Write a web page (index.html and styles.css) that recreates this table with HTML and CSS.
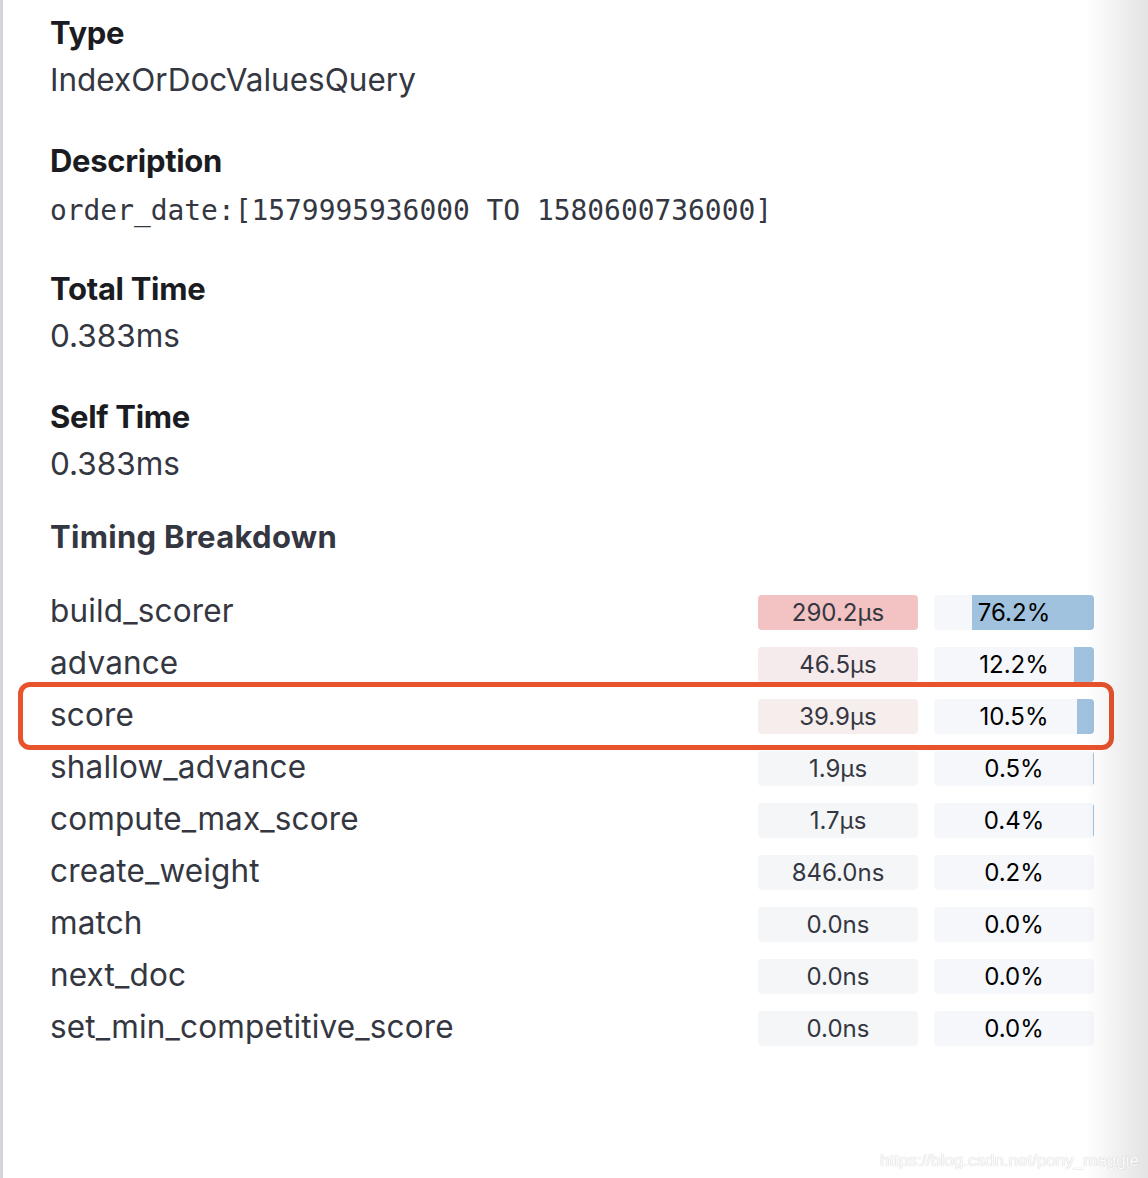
FILE: index.html
```html
<!DOCTYPE html>
<html>
<head>
<meta charset="utf-8">
<link rel="stylesheet" href="styles.css">
</head>
<body>
<div class="page">
  <div class="panel">
    <section class="field">
      <h2 class="title">Type</h2>
      <div class="value">IndexOrDocValuesQuery</div>
    </section>
    <section class="field">
      <h2 class="title">Description</h2>
      <div class="value mono">order_date:[1579995936000 TO 1580600736000]</div>
    </section>
    <section class="field">
      <h2 class="title">Total Time</h2>
      <div class="value">0.383ms</div>
    </section>
    <section class="field last">
      <h2 class="title">Self Time</h2>
      <div class="value">0.383ms</div>
    </section>
    <h2 class="title breakdown-title">Timing Breakdown</h2>
    <div class="rows">
      <div class="row">
        <span class="label">build_scorer</span>
        <span class="bar time t-hot">290.2µs</span>
        <span class="bar pct"><span class="fill" style="width:76.2%"></span><span class="pct-text">76.2%</span></span>
      </div>
      <div class="row">
        <span class="label">advance</span>
        <span class="bar time t-warm">46.5µs</span>
        <span class="bar pct"><span class="fill" style="width:12.2%"></span><span class="pct-text">12.2%</span></span>
      </div>
      <div class="row">
        <span class="label">score</span>
        <span class="bar time t-warm2">39.9µs</span>
        <span class="bar pct"><span class="fill" style="width:10.5%"></span><span class="pct-text">10.5%</span></span>
      </div>
      <div class="row">
        <span class="label">shallow_advance</span>
        <span class="bar time">1.9µs</span>
        <span class="bar pct"><span class="fill" style="width:0.5%"></span><span class="pct-text">0.5%</span></span>
      </div>
      <div class="row">
        <span class="label">compute_max_score</span>
        <span class="bar time">1.7µs</span>
        <span class="bar pct"><span class="fill" style="width:0.4%"></span><span class="pct-text">0.4%</span></span>
      </div>
      <div class="row">
        <span class="label">create_weight</span>
        <span class="bar time">846.0ns</span>
        <span class="bar pct"><span class="fill" style="width:0.2%"></span><span class="pct-text">0.2%</span></span>
      </div>
      <div class="row">
        <span class="label">match</span>
        <span class="bar time">0.0ns</span>
        <span class="bar pct"><span class="pct-text">0.0%</span></span>
      </div>
      <div class="row">
        <span class="label">next_doc</span>
        <span class="bar time">0.0ns</span>
        <span class="bar pct"><span class="pct-text">0.0%</span></span>
      </div>
      <div class="row">
        <span class="label">set_min_competitive_score</span>
        <span class="bar time">0.0ns</span>
        <span class="bar pct"><span class="pct-text">0.0%</span></span>
      </div>
    </div>
  </div>
  <div class="highlight"></div>
  <div class="shade"></div>
  <div class="watermark">https://blog.csdn.net/pony_maggie</div>
</div>
</body>
</html>
```
FILE: styles.css
```css
html, body {
  margin: 0;
  padding: 0;
  background: #fff;
}
.page {
  position: relative;
  width: 1148px;
  height: 1178px;
  overflow: hidden;
  border-left: 3px solid #d3d5da;
  box-sizing: border-box;
  font-family: Inter, "Noto Sans", sans-serif;
  color: #343741;
}
.panel {
  padding: 13px 54px 0 47px;
}
.field {
  margin-bottom: 34px;
}
.field.last {
  margin-bottom: 26px;
}
.title {
  margin: 0;
  font-size: 31px;
  line-height: 40px;
  font-weight: 700;
  color: #1a1c21;
  letter-spacing: -0.3px;
}
.value {
  font-size: 31.5px;
  line-height: 54px;
  height: 54px;
  color: #343741;
}
.mono {
  font-family: "DejaVu Sans Mono", "Liberation Mono", monospace;
  font-size: 27.9px;
  line-height: 60px;
}
.breakdown-title {
  color: #343741;
  margin-bottom: 29px;
  letter-spacing: 0.3px;
}
.rows {
  display: flex;
  flex-direction: column;
}
.row {
  display: flex;
  align-items: center;
  height: 52px;
  gap: 16px;
}
.label {
  flex: 1;
  font-size: 31.5px;
  line-height: 40px;
  padding-bottom: 2px;
  letter-spacing: 0.15px;
  color: #343741;
}
.bar {
  position: relative;
  width: 160px;
  height: 35px;
  border-radius: 4px;
  display: flex;
  align-items: center;
  justify-content: center;
  font-size: 24px;
  overflow: hidden;
}
.time {
  background: #f5f6f7;
  color: #343741;
}
.t-hot { background: #f3c2c2; }
.t-warm { background: #f6ebec; }
.t-warm2 { background: #f6eded; }
.pct {
  background: #f5f7fa;
  color: #000;
}
.fill {
  position: absolute;
  right: 0;
  top: 0;
  bottom: 0;
  background: #a0c2de;
}
.pct-text {
  position: relative;
}
.highlight {
  position: absolute;
  left: 15px;
  top: 682px;
  width: 1096px;
  height: 68px;
  border: 5px solid #e8532c;
  border-radius: 12px;
  box-sizing: border-box;
}
.shade {
  position: absolute;
  top: 0;
  right: 0;
  width: 62px;
  height: 100%;
  background: linear-gradient(to right, rgba(0,0,0,0), rgba(0,0,0,0.11));
  pointer-events: none;
}
.watermark {
  position: absolute;
  right: 9px;
  bottom: 7px;
  font-family: "Liberation Sans", Arial, sans-serif;
  font-size: 17px;
  color: #fdfdfd;
  text-shadow: 0 0 1px #b5b5b5;
}
```
